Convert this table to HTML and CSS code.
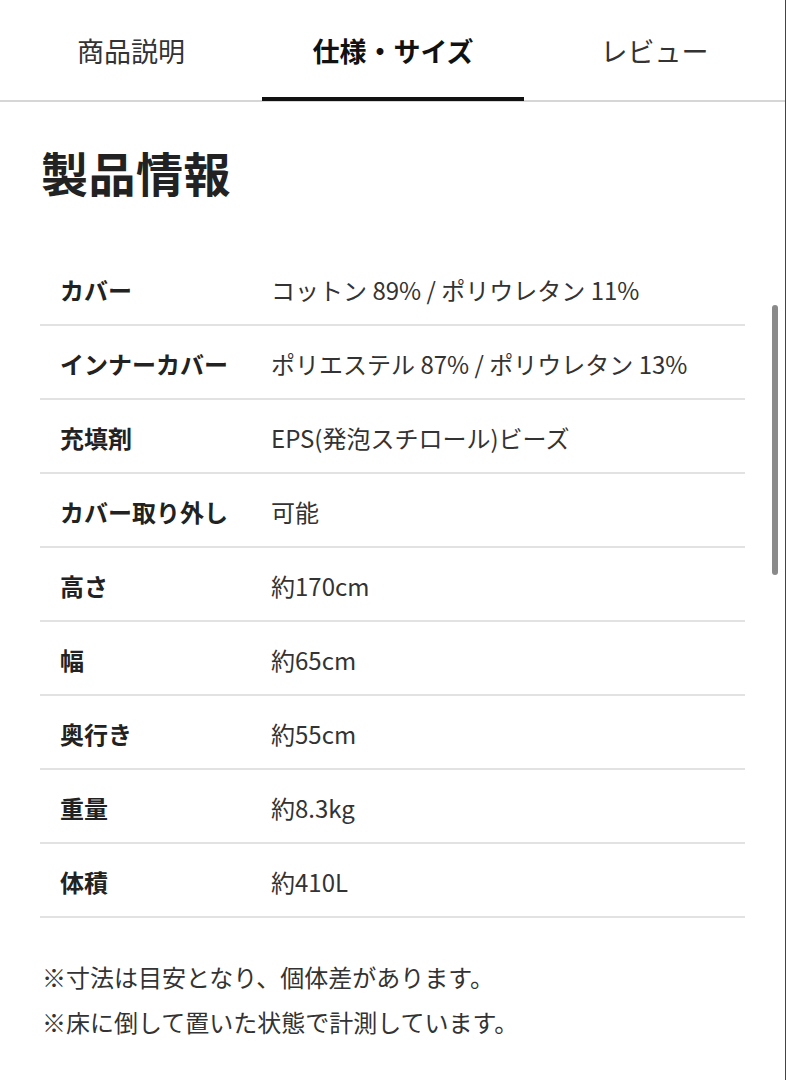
FILE: index.html
```html
<!DOCTYPE html>
<html lang="ja">
<head>
<meta charset="utf-8">
<link rel="stylesheet" href="styles.css">
</head>
<body>
<div class="page">
  <nav class="tabs">
    <div class="tab">商品説明</div>
    <div class="tab active">仕様・サイズ</div>
    <div class="tab">レビュー</div>
  </nav>
  <main class="content">
    <h1 class="title">製品情報</h1>
    <div class="spec">
      <div class="row"><div class="label">カバー</div><div class="value">コットン 89% / ポリウレタン 11%</div></div>
      <div class="row"><div class="label">インナーカバー</div><div class="value">ポリエステル 87% / ポリウレタン 13%</div></div>
      <div class="row"><div class="label">充填剤</div><div class="value">EPS(発泡スチロール)ビーズ</div></div>
      <div class="row"><div class="label">カバー取り外し</div><div class="value">可能</div></div>
      <div class="row"><div class="label">高さ</div><div class="value">約170cm</div></div>
      <div class="row"><div class="label">幅</div><div class="value">約65cm</div></div>
      <div class="row"><div class="label">奥行き</div><div class="value">約55cm</div></div>
      <div class="row"><div class="label">重量</div><div class="value">約8.3kg</div></div>
      <div class="row"><div class="label">体積</div><div class="value">約410L</div></div>
    </div>
    <div class="notes">
      <p>※寸法は目安となり、個体差があります。</p>
      <p>※床に倒して置いた状態で計測しています。</p>
    </div>
  </main>
  <div class="scroll-thumb"></div>
</div>
</body>
</html>
```

FILE: styles.css
```css
* { box-sizing: border-box; }
html, body { margin: 0; padding: 0; background: #fff; }
body {
  font-family: "Noto Sans CJK JP", "Noto Sans", sans-serif;
  color: #222;
}
.page {
  position: relative;
  width: 786px;
  height: 1080px;
  overflow: hidden;
  border-right: 1px solid #444;
}
.tabs {
  display: grid;
  grid-template-columns: 262px 262px 261px;
  height: 102px;
  border-bottom: 2px solid #d6d6d6;
}
.tab {
  display: flex;
  align-items: center;
  justify-content: center;
  font-size: 27px;
  color: #333;
  padding-top: 4px;
  border-bottom: 4px solid transparent;
  margin-bottom: -1px;
}
.tab.active {
  color: #111;
  font-weight: 700;
  border-bottom-color: #111;
}
.content {
  padding: 0 40px 0 40px;
}
.title {
  margin: 38px 0 48px 1px;
  font-size: 47px;
  line-height: 64px;
  font-weight: 700;
  color: #222;
  letter-spacing: 0.5px;
}
.spec {
  width: 705px;
}
.row {
  display: grid;
  grid-template-columns: 231px 1fr;
  align-items: center;
  height: 74px;
  border-bottom: 2px solid #e2e2e2;
  padding-top: 3px;
}
.label {
  padding-left: 20px;
  font-size: 24px;
  font-weight: 700;
  color: #222;
}
.value {
  font-size: 24px;
  color: #333;
}
.notes {
  margin-top: 36px;
  padding-left: 2px;
}
.notes p {
  margin: 0;
  font-size: 24px;
  line-height: 45px;
  color: #333;
}
.scroll-thumb {
  position: absolute;
  left: 772px;
  top: 305px;
  width: 6px;
  height: 270px;
  border-radius: 3px;
  background: #8a8a8a;
}
```
